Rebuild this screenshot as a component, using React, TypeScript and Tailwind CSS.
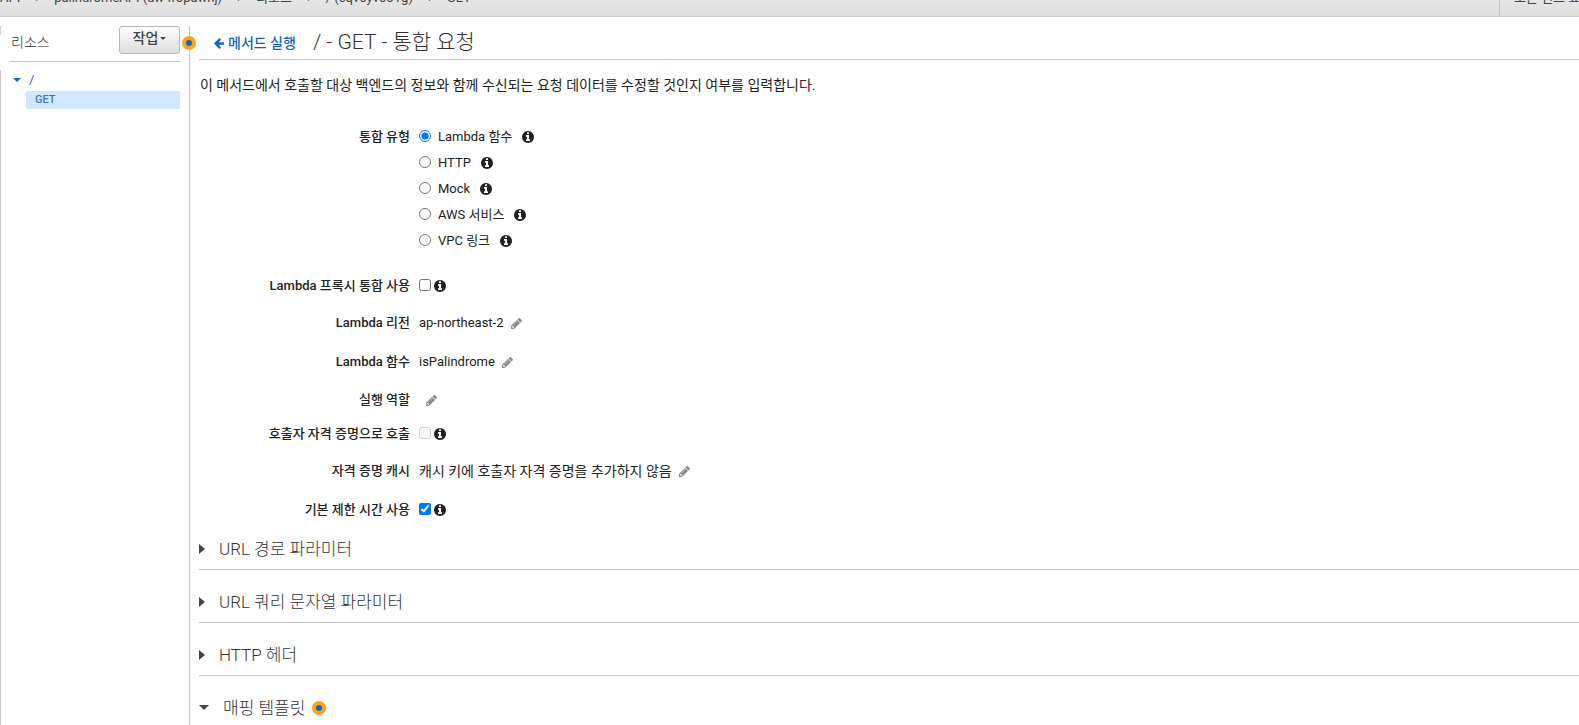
import { useState } from 'react'
import type { ReactNode } from 'react'

const CRUMBS = ['API', 'palindromeAPI (uw4ropawhj)', '리소스', '/ (cqv6yv0o1g)', 'GET']

const INTEGRATION_TYPES = [
  { value: 'lambda', label: 'Lambda 함수' },
  { value: 'http', label: 'HTTP' },
  { value: 'mock', label: 'Mock' },
  { value: 'aws', label: 'AWS 서비스' },
  { value: 'vpc', label: 'VPC 링크' },
]

const COLLAPSED_SECTIONS = ['URL 경로 파라미터', 'URL 쿼리 문자열 파라미터', 'HTTP 헤더']

function Glyph({ d, className }: { d: string; className: string }) {
  return (
    <svg viewBox="0 0 1792 1792" fill="currentColor" aria-hidden="true" className={`shrink-0 ${className}`}>
      <path d={d} />
    </svg>
  )
}

function InfoButton() {
  return (
    <button type="button" aria-label="정보" className="text-[#222222]">
      <Glyph
        className="size-[14px]"
        d="M1152 1376v-160q0-14-9-23t-23-9h-96v-512q0-14-9-23t-23-9h-320q-14 0-23 9t-9 23v160q0 14 9 23t23 9h96v320h-96q-14 0-23 9t-9 23v160q0 14 9 23t23 9h448q14 0 23-9t9-23zm-128-896v-160q0-14-9-23t-23-9h-192q-14 0-23 9t-9 23v160q0 14 9 23t23 9h192q14 0 23-9t9-23zm640 416q0 209-103 385.5t-279.5 279.5-385.5 103-385.5-103-279.5-279.5-103-385.5 103-385.5 279.5-279.5 385.5-103 385.5 103 279.5 279.5 103 385.5z"
      />
    </button>
  )
}

function EditButton({ label }: { label: string }) {
  return (
    <button type="button" aria-label={`${label} 편집`} className="ml-1.5 text-[#888888]">
      <Glyph
        className="size-[13px]"
        d="M491 1536l91-91-235-235-91 91v107h128v128h107zM1014 608q0-22-22-22-10 0-17 7l-542 542q-7 7-7 17 0 22 22 22 10 0 17-7l542-542q7-7 7-17zM960 416l416 416-832 832h-416v-416zM1643 512q0 53-37 90l-166 166-416-416 166-165q36-38 90-38 53 0 91 38l235 234q37 39 37 91z"
      />
    </button>
  )
}

function HintDot() {
  return (
    <span className="flex size-[14px] items-center justify-center rounded-full bg-[#fba31f]">
      <span className="size-[6px] rounded-full bg-[#1166bb]" />
    </span>
  )
}

function Row({ label, htmlFor, className, children }: {
  label: string
  htmlFor?: string
  className: string
  children: ReactNode
}) {
  const labelClass = 'w-[211px] shrink-0 text-right font-medium'
  return (
    <div className={`flex items-center gap-[9px] ${className}`}>
      {htmlFor ? (
        <label htmlFor={htmlFor} className={labelClass}>{label}</label>
      ) : (
        <span className={labelClass}>{label}</span>
      )}
      <div className="flex items-center">{children}</div>
    </div>
  )
}

function TopBar() {
  return (
    <header className="flex h-[17px] items-stretch justify-between overflow-hidden border-b border-[#d0d0d0] bg-linear-to-b from-[#e6e6e6] to-[#dedede] text-[#444444]">
      <nav aria-label="breadcrumb" className="-mt-3 flex h-5 items-center gap-[15px] whitespace-nowrap">
        {CRUMBS.map((crumb, i) => (
          <span key={crumb} className="flex items-center gap-[15px]">
            {i > 0 && <span aria-hidden="true">›</span>}
            <a href="#">{crumb}</a>
          </span>
        ))}
      </nav>
      <div className="w-20 border-l border-[#c4c4c4] pl-[14px]">
        <button type="button" className="-mt-3 block h-5 whitespace-nowrap">모든 힌트 표시</button>
      </div>
    </header>
  )
}

function Sidebar() {
  return (
    <aside className="flex w-[180px] shrink-0 flex-col">
      <div className="relative ml-[10px] flex h-[36px] items-start justify-between border-b border-[#c4c4c4]">
        <span className="absolute top-0 -left-[10px] h-[9px] border-l border-[#cccccc]" />
        <h2 className="mt-1.5 ml-px text-sm font-light text-[#333333]">리소스</h2>
        <button
          type="button"
          className="flex h-7 w-[61px] items-center justify-center gap-0.5 rounded-[3px] border border-[#b8b8b8] bg-linear-to-b from-white to-[#dddddd] pb-1 text-sm font-medium text-[#444444]"
        >
          작업
          <span className="border-x-[3px] border-t-[3px] border-x-transparent border-t-[#444444]" />
        </button>
      </div>
      <ul className="mt-2 flex-1 border-l border-[#cccccc] pl-[9px]">
        <li>
          <a href="#" className="flex h-5 items-center gap-2 pl-[3px] text-[#1166bb]">
            <span className="border-x-4 border-t-4 border-x-transparent border-t-[#1166bb]" />
            /
          </a>
          <a href="#" className="mt-px ml-4 block h-[18px] bg-[#d1e7ff] pl-[9px] text-[11px] leading-[18px] font-medium text-[#4477aa]">
            GET
          </a>
        </li>
      </ul>
    </aside>
  )
}

function IntegrationForm() {
  const [type, setType] = useState('lambda')
  const [proxy, setProxy] = useState(false)
  const [defaultTimeout, setDefaultTimeout] = useState(true)

  return (
    <form className="mt-[29px]">
      <div role="radiogroup" aria-label="통합 유형" className="flex gap-[9px]">
        <span className="w-[211px] shrink-0 text-right leading-[26px] font-medium">통합 유형</span>
        <div>
          {INTEGRATION_TYPES.map((t) => (
            <div key={t.value} className="flex h-[26px] items-center gap-[9px]">
              <label className="flex items-center gap-[7px]">
                <input
                  type="radio"
                  name="integration-type"
                  checked={type === t.value}
                  onChange={() => setType(t.value)}
                  className="mb-0.5 size-3"
                />
                {t.label}
              </label>
              <InfoButton />
            </div>
          ))}
        </div>
      </div>

      <Row label="Lambda 프록시 통합 사용" htmlFor="proxy" className="mt-[14px] h-[36px]">
        <input
          id="proxy"
          type="checkbox"
          checked={proxy}
          onChange={(e) => setProxy(e.target.checked)}
          className="mr-0.5 mb-0.5 size-3"
        />
        <InfoButton />
      </Row>
      <Row label="Lambda 리전" className="h-[38px]">
        ap-northeast-2
        <EditButton label="Lambda 리전" />
      </Row>
      <Row label="Lambda 함수" className="h-[40px]">
        isPalindrome
        <EditButton label="Lambda 함수" />
      </Row>
      <Row label="실행 역할" className="h-[36px]">
        <EditButton label="실행 역할" />
      </Row>
      <Row label="호출자 자격 증명으로 호출" htmlFor="caller" className="h-8">
        <input id="caller" type="checkbox" disabled className="mr-0.5 mb-0.5 size-3" />
        <InfoButton />
      </Row>
      <Row label="자격 증명 캐시" className="h-[42px]">
        <span className="text-sm">캐시 키에 호출자 자격 증명을 추가하지 않음</span>
        <EditButton label="자격 증명 캐시" />
      </Row>
      <Row label="기본 제한 시간 사용" htmlFor="timeout" className="h-[36px]">
        <input
          id="timeout"
          type="checkbox"
          checked={defaultTimeout}
          onChange={(e) => setDefaultTimeout(e.target.checked)}
          className="mr-0.5 mb-0.5 size-3"
        />
        <InfoButton />
      </Row>
    </form>
  )
}

export default function App() {
  return (
    <div className="flex h-screen flex-col overflow-hidden bg-white font-[Roboto,'Noto_Sans_CJK_KR',sans-serif] text-[13px] leading-5 text-[#222222]">
      <TopBar />
      <div className="flex min-h-0 flex-1 pt-[9px]">
        <Sidebar />
        <main className="relative ml-[9px] min-w-0 flex-1 border-l border-[#c4c4c4] pl-[9px]">
          <div className="absolute top-[10px] -left-[8px]">
            <HintDot />
          </div>
          <div className="flex h-[34px] items-center border-b border-[#c4c4c4] pl-[14px]">
            <a href="#" className="flex items-center gap-[3px] text-sm font-medium text-[#1166bb]">
              <Glyph
                className="size-3"
                d="M1664 896v128q0 53-32.5 90.5t-84.5 37.5h-704l293 294q38 36 38 90t-38 90l-75 76q-37 37-90 37-52 0-91-37l-651-652q-37-37-37-90 0-52 37-91l651-650q38-38 91-38 52 0 90 38l75 74q38 38 38 91t-38 91l-293 293h704q52 0 84.5 37.5t32.5 90.5z"
              />
              메서드 실행
            </a>
            <h1 className="mb-0.5 ml-[17px] text-[21px] font-light text-[#333333]">/ - GET - 통합 요청</h1>
          </div>
          <p className="mt-[15px] ml-px text-sm">
            이 메서드에서 호출할 대상 백엔드의 정보와 함께 수신되는 요청 데이터를 수정할 것인지 여부를 입력합니다.
          </p>
          <IntegrationForm />
          {COLLAPSED_SECTIONS.map((title) => (
            <h2 key={title} className="mb-[11px] border-b border-[#c4c4c4] text-[17px] font-light text-[#333333]">
              <button type="button" aria-expanded="false" className="flex h-[41px] w-full items-center gap-[14px] text-left">
                <span className="border-y-[5px] border-l-[6px] border-y-transparent border-l-[#444444]" />
                {title}
              </button>
            </h2>
          ))}
          <h2 className="flex h-[41px] items-center gap-[7px] text-[17px] font-light text-[#333333]">
            <button type="button" aria-expanded="true" className="flex items-center gap-[14px]">
              <span className="border-x-[5px] border-t-[5px] border-x-transparent border-t-[#444444]" />
              매핑 템플릿
            </button>
            <HintDot />
          </h2>
        </main>
      </div>
    </div>
  )
}
